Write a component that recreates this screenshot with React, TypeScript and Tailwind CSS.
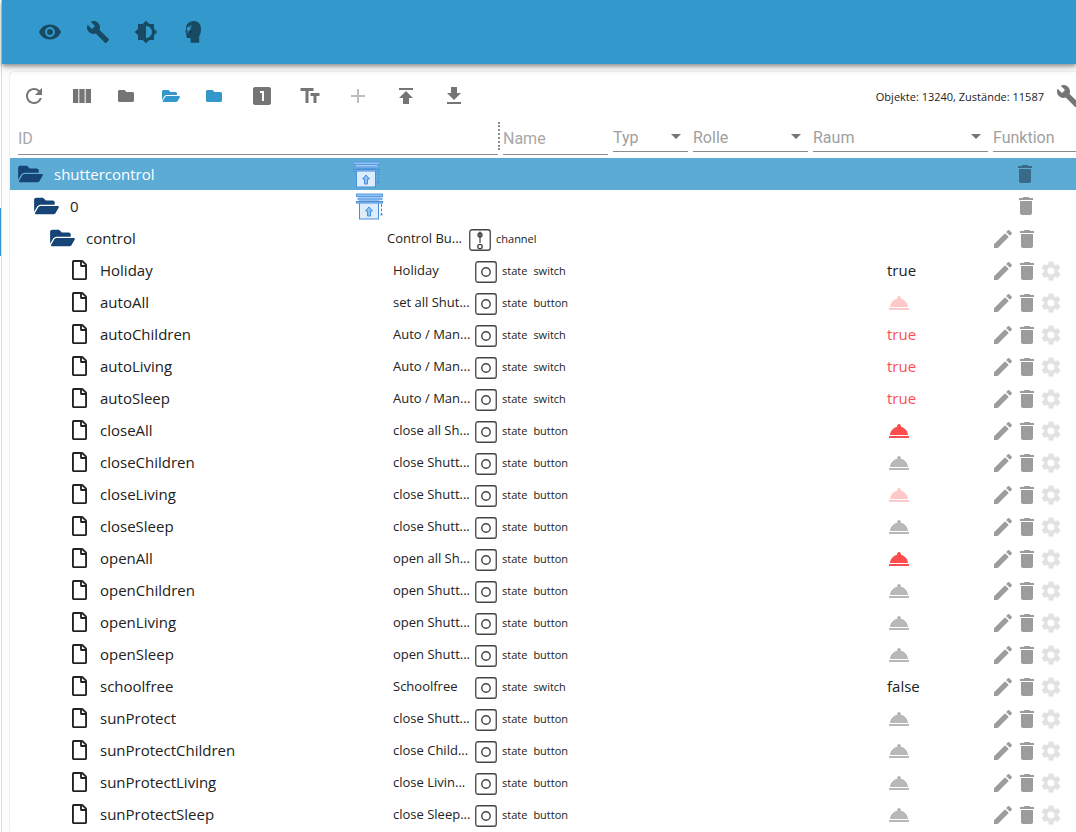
import type { ComponentType, ReactNode } from "react";
import {
  MdAdd,
  MdArrowDropDown,
  MdBrightness6,
  MdBuild,
  MdDelete,
  MdEdit,
  MdGetApp,
  MdLooksOne,
  MdPublish,
  MdRefresh,
  MdRoomService,
  MdSettings,
  MdTextFields,
  MdVisibility,
} from "react-icons/md";
import { FaFolder, FaFolderOpen, FaRegFile } from "react-icons/fa";

type Value = "true" | "false" | "trueRed" | "bellPale" | "bellRed" | "bellGrey";

type StateRow = { id: string; name: string; role: "switch" | "button"; value: Value };

const states: StateRow[] = [
  { id: "Holiday", name: "Holiday", role: "switch", value: "true" },
  { id: "autoAll", name: "set all Shut...", role: "button", value: "bellPale" },
  { id: "autoChildren", name: "Auto / Man...", role: "switch", value: "trueRed" },
  { id: "autoLiving", name: "Auto / Man...", role: "switch", value: "trueRed" },
  { id: "autoSleep", name: "Auto / Man...", role: "switch", value: "trueRed" },
  { id: "closeAll", name: "close all Sh...", role: "button", value: "bellRed" },
  { id: "closeChildren", name: "close Shutt...", role: "button", value: "bellGrey" },
  { id: "closeLiving", name: "close Shutt...", role: "button", value: "bellPale" },
  { id: "closeSleep", name: "close Shutt...", role: "button", value: "bellGrey" },
  { id: "openAll", name: "open all Sh...", role: "button", value: "bellRed" },
  { id: "openChildren", name: "open Shutt...", role: "button", value: "bellGrey" },
  { id: "openLiving", name: "open Shutt...", role: "button", value: "bellGrey" },
  { id: "openSleep", name: "open Shutt...", role: "button", value: "bellGrey" },
  { id: "schoolfree", name: "Schoolfree", role: "switch", value: "false" },
  { id: "sunProtect", name: "close Shutt...", role: "button", value: "bellGrey" },
  { id: "sunProtectChildren", name: "close Child...", role: "button", value: "bellGrey" },
  { id: "sunProtectLiving", name: "close Livin...", role: "button", value: "bellGrey" },
  { id: "sunProtectSleep", name: "close Sleep...", role: "button", value: "bellGrey" },
];

function ColumnsIcon({ className }: { className?: string }) {
  return (
    <svg viewBox="0 0 24 24" fill="currentColor" className={className}>
      <path d="M14.67 5v14H9.33V5h5.34zm1 14H21V5h-5.33v14zm-7.34 0V5H3v14h5.33z" />
    </svg>
  );
}

function ExpertIcon({ className }: { className?: string }) {
  return (
    <svg viewBox="0 0 24 24" fill="currentColor" className={className}>
      <path d="M12 1C8 1 4.800 3.300 4.200 6.600L4 9L3.500 11.800C3.400 12.400 3.800 12.900 4.300 13V16.500C4.300 17.400 5 18 5.900 18H8.600V22.800H17.200V16.200C18.400 14.800 19 12 19 8.600C19 4.300 16.200 1 12 1Z" />
      <path d="M5.200 7.400l1.200-1 1.400.5.900 1-.2 1.600-1.200 1.200-1.700-.2-.9-1.100z" fill="#3399cc" />
      <path d="M7.800 5.400h1.800v1.800H7.800zM5 11.400l1.400-.6.600 1.500-1.500.6z" fill="#2f8bb9" />
      <path d="M7.400 11h1.700v1.800H7.400z" fill="#0c2f42" />
    </svg>
  );
}

function ShutterIcon() {
  return (
    <svg viewBox="0 0 28 28" className="h-7 w-7">
      <rect x="3.500" y="9" width="19" height="18" fill="#dcedfd" stroke="#4b8fd9" />
      <path d="M3 5.500h21M3 9.500h21" stroke="#dcedfd" />
      <rect x="0.500" y="2" width="26" height="2.500" fill="#8cc2f7" stroke="#5b9be0" />
      <rect x="2" y="6" width="24" height="1.800" fill="#8cc2f7" stroke="#5b9be0" strokeWidth="0.800" />
      <rect x="0.500" y="9.500" width="26" height="1.500" fill="#8cc2f7" stroke="#4b8fd9" />
      <path d="M13 15l3.500 4h-2v5h-3v-5h-2z" fill="#8cc2f7" stroke="#4b8fd9" />
      <path d="M25.500 12v10" stroke="#4b8fd9" strokeDasharray="3 1.500" />
      <rect x="24.500" y="21.500" width="2" height="2" fill="#4b8fd9" />
    </svg>
  );
}

function StateIcon() {
  return (
    <svg viewBox="0 0 22 22" className="h-[22px] w-[22px]" fill="none" stroke="#444">
      <rect x="0.750" y="0.750" width="20.500" height="20.500" rx="2.200" strokeWidth="1.300" />
      <circle cx="11" cy="11" r="4.200" strokeWidth="1.400" />
    </svg>
  );
}

function ChannelIcon() {
  return (
    <svg viewBox="0 0 22 22" className="h-[22px] w-[22px]" fill="none" stroke="#444">
      <rect x="0.750" y="0.750" width="20.500" height="20.500" rx="2.200" strokeWidth="1.300" />
      <circle cx="11" cy="6" r="2" fill="#999" strokeWidth="1.300" />
      <path d="M11 2.500v11.500" strokeWidth="1.200" />
      <circle cx="11" cy="17.500" r="2.200" fill="#fff" strokeWidth="1.300" />
    </svg>
  );
}

type Icon = ComponentType<{ className?: string }>;

function BarButton({ icon: IconEl, label, tone }: { icon: Icon; label: string; tone: string }) {
  return (
    <button type="button" aria-label={label} className={`flex h-12 w-12 shrink-0 items-center justify-center ${tone}`}>
      <IconEl className="h-6 w-6" />
    </button>
  );
}

function FolderButton({ icon: IconEl, label, tone, size }: { icon: Icon; label: string; tone: string; size: string }) {
  return (
    <button type="button" aria-label={label} className={`flex h-12 w-11 shrink-0 items-center pl-3 ${tone}`}>
      <IconEl className={size} />
    </button>
  );
}

function TextFilter({ label, width }: { label: string; width: string }) {
  return (
    <input
      type="text"
      aria-label={label}
      placeholder={label}
      className={`h-[35px] border-b border-[#8c8c8c] bg-transparent pt-0.5 text-base text-[#333] outline-none placeholder:text-[#a8a8a8] placeholder:opacity-100 ${width}`}
    />
  );
}

function SelectFilter({ label, width }: { label: string; width: string }) {
  return (
    <div className={`relative shrink-0 ${width}`}>
      <select
        aria-label={label}
        defaultValue=""
        className="h-8 w-full appearance-none border-b border-[#8c8c8c] bg-transparent pt-1 text-base text-[#a0a0a0] outline-none"
      >
        <option value="">{label}</option>
      </select>
      <MdArrowDropDown className="pointer-events-none absolute top-1 right-0 h-6 w-6 text-[#757575]" />
    </div>
  );
}

function IconButton({ icon: IconEl, label, tone }: { icon: Icon; label: string; tone: string }) {
  return (
    <button type="button" aria-label={label} className={`h-6 w-6 ${tone}`}>
      <IconEl className="h-6 w-6" />
    </button>
  );
}

function ValueCell({ value, id }: { value: Value; id: string }) {
  if (value === "true" || value === "false") return <span>{value}</span>;
  if (value === "trueRed") return <span className="text-[#ff4d4d]">true</span>;
  const tone = value === "bellPale" ? "text-[#ffc9c9]" : value === "bellRed" ? "text-[#ff4d4d]" : "text-[#b8b8b8]";
  return (
    <div className="pt-0.5">
      <IconButton icon={MdRoomService} label={`Trigger ${id}`} tone={`block ${tone}`} />
    </div>
  );
}

function FolderCell({ id, indent }: { id: string; indent: string }) {
  return (
    <td className={indent}>
      <div className="flex items-center">
        <FaFolderOpen className="mr-[11px] h-[22px] w-[25px] text-[#164477]" />
        {id}
      </div>
    </td>
  );
}

function TypeCell({ icon, type, role, indent }: { icon: ReactNode; type: string; role?: string; indent: string }) {
  return (
    <td className={`text-[11px] ${indent}`}>
      <div className="flex items-center">
        <div className="mr-[5px] pt-[3px]">{icon}</div>
        <span className="mr-1.5 pt-0.5">{type}</span>
        {role && <span className="pt-0.5">{role}</span>}
      </div>
    </td>
  );
}

export default function App() {
  return (
    <div className="flex min-h-screen overflow-hidden bg-[#fdfdfd] font-['Open_Sans',sans-serif] text-[#222]">
      <aside className="w-0.5 shrink-0 border-r border-[#dcdcdc] bg-white">
        <div className="mt-52 h-12 w-px bg-[#3399cc]" />
      </aside>
      <div className="flex min-w-0 flex-1 flex-col">
        <header className="relative flex h-16 items-center bg-[#3399cc] pl-6 shadow-[0_2px_4px_rgba(0,0,0,0.35),0_4px_8px_rgba(0,0,0,0.15)]">
          <BarButton icon={MdVisibility} label="Visibility" tone="text-[#174a63]" />
          <BarButton icon={MdBuild} label="Settings" tone="text-[#174a63]" />
          <BarButton icon={MdBrightness6} label="Theme" tone="text-[#174a63]" />
          <BarButton icon={ExpertIcon} label="Expert mode" tone="text-[#174a63]" />
        </header>
        <main className="mt-2 ml-2 flex-1 overflow-hidden rounded-tl bg-white shadow-[0_0_2px_rgba(0,0,0,0.2)]">
          <div className="-mr-4 flex h-12 items-center">
            <BarButton icon={MdRefresh} label="Refresh" tone="text-[#757575]" />
            <BarButton icon={ColumnsIcon} label="Columns" tone="text-[#757575]" />
            <FolderButton icon={FaFolder} label="Collapse all" tone="text-[#757575]" size="h-4 w-4" />
            <FolderButton icon={FaFolderOpen} label="Expand all" tone="text-[#3399cc]" size="h-4 w-[18px]" />
            <FolderButton icon={FaFolder} label="Collapse one level" tone="text-[#3399cc]" size="h-4 w-4" />
            <BarButton icon={MdLooksOne} label="Expand one level" tone="text-[#757575]" />
            <BarButton icon={MdTextFields} label="Descriptions" tone="text-[#757575]" />
            <BarButton icon={MdAdd} label="Add" tone="text-[#bdbdbd]" />
            <BarButton icon={MdPublish} label="Upload" tone="text-[#757575]" />
            <BarButton icon={MdGetApp} label="Download" tone="text-[#757575]" />
            <div className="ml-auto pt-0.5 text-[11px] whitespace-nowrap">Objekte: 13240, Zustände: 11587</div>
            <BarButton icon={MdBuild} label="Edit columns" tone="text-[#757575]" />
          </div>
          <div className="flex h-[38px] gap-[5px] pl-2 font-['Roboto',sans-serif]">
            <div className="relative flex min-w-0 flex-1">
              <TextFilter label="ID" width="w-full" />
              <div className="absolute top-0.5 -right-0.5 h-7 border-r-2 border-dotted border-[#8c8c8c]" />
            </div>
            <TextFilter label="Name" width="w-[105px]" />
            <SelectFilter label="Typ" width="w-[75px]" />
            <SelectFilter label="Rolle" width="w-[115px]" />
            <SelectFilter label="Raum" width="w-[175px]" />
            <SelectFilter label="Funktion" width="-mr-8 w-[115px]" />
          </div>
          <table className="w-full table-fixed text-left text-[15px] whitespace-nowrap">
            <colgroup>
              <col />
              <col className="w-8" />
              <col className="w-[84px]" />
              <col className="w-[418px]" />
              <col className="w-[104px]" />
              <col className="w-[85px]" />
            </colgroup>
            <tbody>
              <tr className="h-8 bg-[#5cabd5] text-white">
                <FolderCell id="shuttercontrol" indent="pl-2" />
                <td>
                  <ShutterIcon />
                </td>
                <td />
                <td />
                <td />
                <td>
                  <div className="flex pl-[22px]">
                    <IconButton icon={MdDelete} label="Delete shuttercontrol" tone="text-[#386b88]" />
                  </div>
                </td>
              </tr>
              <tr className="h-8">
                <FolderCell id="0" indent="pl-6" />
                <td className="pl-[3px]">
                  <ShutterIcon />
                </td>
                <td />
                <td />
                <td />
                <td>
                  <div className="flex pl-[23px]">
                    <IconButton icon={MdDelete} label="Delete 0" tone="text-[#9c9c9c]" />
                  </div>
                </td>
              </tr>
              <tr className="h-8">
                <FolderCell id="control" indent="pl-10" />
                <td />
                <td className="pt-0.5 pl-0.5 text-[13px]">Control Bu...</td>
                <TypeCell icon={<ChannelIcon />} type="channel" indent="" />
                <td />
                <td>
                  <div className="flex pt-0.5">
                    <IconButton icon={MdEdit} label="Edit control" tone="text-[#9c9c9c]" />
                    <IconButton icon={MdDelete} label="Delete control" tone="text-[#9c9c9c]" />
                  </div>
                </td>
              </tr>
              {states.map((s) => (
                <tr key={s.id} className="h-8">
                  <td className="pl-[62px]">
                    <div className="flex items-center">
                      <FaRegFile className="mr-[13px] h-5 w-[15px]" />
                      {s.id}
                    </div>
                  </td>
                  <td />
                  <td className="pt-0.5 pl-2 text-[13px]">{s.name}</td>
                  <TypeCell icon={<StateIcon />} type="state" role={s.role} indent="pl-1.5" />
                  <td>
                    <ValueCell value={s.value} id={s.id} />
                  </td>
                  <td>
                    <div className="flex pt-0.5">
                      <IconButton icon={MdEdit} label={`Edit ${s.id}`} tone="text-[#9c9c9c]" />
                      <IconButton icon={MdDelete} label={`Delete ${s.id}`} tone="text-[#9c9c9c]" />
                      <IconButton icon={MdSettings} label={`Configure ${s.id}`} tone="text-[#e2e2e2]" />
                    </div>
                  </td>
                </tr>
              ))}
            </tbody>
          </table>
        </main>
      </div>
    </div>
  );
}
